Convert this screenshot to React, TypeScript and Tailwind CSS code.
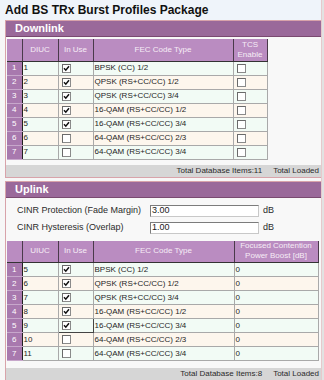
import React from 'react';

type Row = { n: number; code: number; use: boolean; fec: string; extra?: string };

const downRows: Row[] = [
    { n: 1, code: 1, use: true, fec: 'BPSK (CC) 1/2' },
    { n: 2, code: 2, use: true, fec: 'QPSK (RS+CC/CC) 1/2' },
    { n: 3, code: 3, use: true, fec: 'QPSK (RS+CC/CC) 3/4' },
    { n: 4, code: 4, use: true, fec: '16-QAM (RS+CC/CC) 1/2' },
    { n: 5, code: 5, use: true, fec: '16-QAM (RS+CC/CC) 3/4' },
    { n: 6, code: 6, use: false, fec: '64-QAM (RS+CC/CC) 2/3' },
    { n: 7, code: 7, use: false, fec: '64-QAM (RS+CC/CC) 3/4' },
];

const upRows: Row[] = [
    { n: 1, code: 5, use: true, fec: 'BPSK (CC) 1/2', extra: '0' },
    { n: 2, code: 6, use: true, fec: 'QPSK (RS+CC/CC) 1/2', extra: '0' },
    { n: 3, code: 7, use: true, fec: 'QPSK (RS+CC/CC) 3/4', extra: '0' },
    { n: 4, code: 8, use: true, fec: '16-QAM (RS+CC/CC) 1/2', extra: '0' },
    { n: 5, code: 9, use: true, fec: '16-QAM (RS+CC/CC) 3/4', extra: '0' },
    { n: 6, code: 10, use: false, fec: '64-QAM (RS+CC/CC) 2/3', extra: '0' },
    { n: 7, code: 11, use: false, fec: '64-QAM (RS+CC/CC) 3/4', extra: '0' },
];

const Check: React.FC<{ on: boolean }> = ({ on }) => (
    <span className="flex h-[9px] w-[9px] items-center justify-center border border-[#8a8a8a] border-t-[#6a6a6a] border-l-[#6a6a6a] bg-white">
        {on && (
            <svg viewBox="0 0 7 7" className="h-[7px] w-[7px]">
                <path d="M1 3.2 L2.8 5.2 L6 1.2" stroke="#111" strokeWidth="1.5" fill="none" />
            </svg>
        )}
    </span>
);

const SectionHeader: React.FC<{ title: string }> = ({ title }) => (
    <div className="flex h-[16px] items-center border-b border-[#7a4a70] bg-[#9a699a] pl-[9px] text-[11px] font-bold text-white">
        {title}
    </div>
);

const Footer: React.FC<{ count: number }> = ({ count }) => (
    <div className="flex h-[12px] items-center justify-end gap-[11px] bg-[#d6d6d6] pr-[5px] text-[8px] text-[#2a2a2a]">
        <span>Total Database Items:{count}</span>
        <span>Total Loaded</span>
    </div>
);

const th = 'border-r border-b border-r-[#4a3a4a] border-b-[#333] bg-[#ba8cc1] p-0 text-center align-middle text-[8px] font-normal leading-[10px] text-[#f6ecf6]';

const ProfileTable: React.FC<{ codeLabel: string; lastLabel: React.ReactNode; lastWidth: string; fecWidth: string; rows: Row[]; focusRow?: number }> = ({
    codeLabel,
    lastLabel,
    lastWidth,
    fecWidth,
    rows,
    focusRow,
}) => (
    <table className="border-collapse table-fixed">
        <thead>
            <tr className="h-[22px]">
                <th className={`${th} w-[15px] bg-[#ab7db1]`}></th>
                <th className={`${th} w-[36px]`}>{codeLabel}</th>
                <th className={`${th} w-[35px]`}>In Use</th>
                <th className={`${th} ${fecWidth}`}>FEC Code Type</th>
                <th className={`${th} ${lastWidth}`}>{lastLabel}</th>
            </tr>
        </thead>
        <tbody>
            {rows.map((r) => {
                const bg = r.n % 2 === 1 ? 'bg-[#f2fbf5]' : 'bg-[#fdf6ed]';
                const td = `h-[14px] border-r border-b border-[#a9a9a9] p-0 pl-[1px] text-[8px] leading-none text-[#1e1e1e] ${bg}`;
                const focused = focusRow === r.n;
                return (
                    <tr key={r.n}>
                        <td className="h-[14px] border-r border-b border-r-[#222] border-b-[#c7a7cb] bg-[#a879ae] p-0 text-center text-[8px] leading-none text-white">{r.n}</td>
                        <td className={td}>{r.code}</td>
                        <td className={`${td} ${focused ? 'border-r-[#444] border-b-[#444]' : ''}`}>
                            <div className="pl-[2px]">
                                <Check on={r.use} />
                            </div>
                        </td>
                        <td className={td}>{r.fec}</td>
                        <td className={td}>
                            {r.extra !== undefined ? r.extra : (
                                <div className="pl-[2px]">
                                    <Check on={false} />
                                </div>
                            )}
                        </td>
                    </tr>
                );
            })}
        </tbody>
    </table>
);

const Field: React.FC<{ label: string; value: string }> = ({ label, value }) => (
    <div className="flex h-[17px] items-center">
        <span className="w-[144px] shrink-0 whitespace-nowrap pl-[11px] text-[9px] text-[#2b2b2b]">{label}</span>
        <div className="flex h-[12px] w-[109px] shrink-0 items-center border border-[#7c7c7c] border-b-[#c8c8c8] border-r-[#c8c8c8] bg-white pl-[1px] text-[9px] text-[#1a1a1a]">
            {value}
        </div>
        <span className="pl-[4px] text-[9px] text-[#2b2b2b]">dB</span>
    </div>
);

export default function App() {
    return (
        <div className="flex h-[380px] w-[324px] overflow-hidden bg-[#f7f7f7] font-['Liberation_Sans',Arial,sans-serif]">
            <div className="flex w-[321px] shrink-0 flex-col">
                <div className="flex h-[20px] shrink-0 items-center bg-[#eff4fa] pl-[5px] text-[12px] font-bold text-[#111]">
                    Add BS TRx Burst Profiles Package
                </div>

                <div className="ml-[5px] w-[320px] border border-[#d8a3aa] bg-[#f8f8f8]">
                    <SectionHeader title="Downlink" />
                    <div className="pl-[1px] pt-[2px]">
                        <ProfileTable
                            codeLabel="DIUC"
                            fecWidth="w-[140px]"
                            lastWidth="w-[34px]"
                            lastLabel={<>TCS<br />Enable</>}
                            rows={downRows}
                        />
                    </div>
                    <div className="h-[5px]" />
                    <Footer count={11} />
                </div>

                <div className="ml-[5px] mt-[3px] w-[320px] border border-[#d8a3aa] bg-[#f8f8f8]">
                    <SectionHeader title="Uplink" />
                    <div className="pt-[5px] pb-[4px]">
                        <Field label="CINR Protection (Fade Margin)" value="3.00" />
                        <Field label="CINR Hysteresis (Overlap)" value="1.00" />
                    </div>
                    <div className="pl-[1px]">
                        <ProfileTable
                            codeLabel="UIUC"
                            fecWidth="w-[141px]"
                            lastWidth="w-[84px]"
                            lastLabel={<>Focused Contention<br />Power Boost [dB]</>}
                            rows={upRows}
                            focusRow={5}
                        />
                    </div>
                    <div className="h-[7px]" />
                    <Footer count={8} />
                </div>
            </div>
            <div className="h-full w-[3px] shrink-0 border-l border-[#e6c9cc] bg-[#e2e2e2]" />
        </div>
    );
}
